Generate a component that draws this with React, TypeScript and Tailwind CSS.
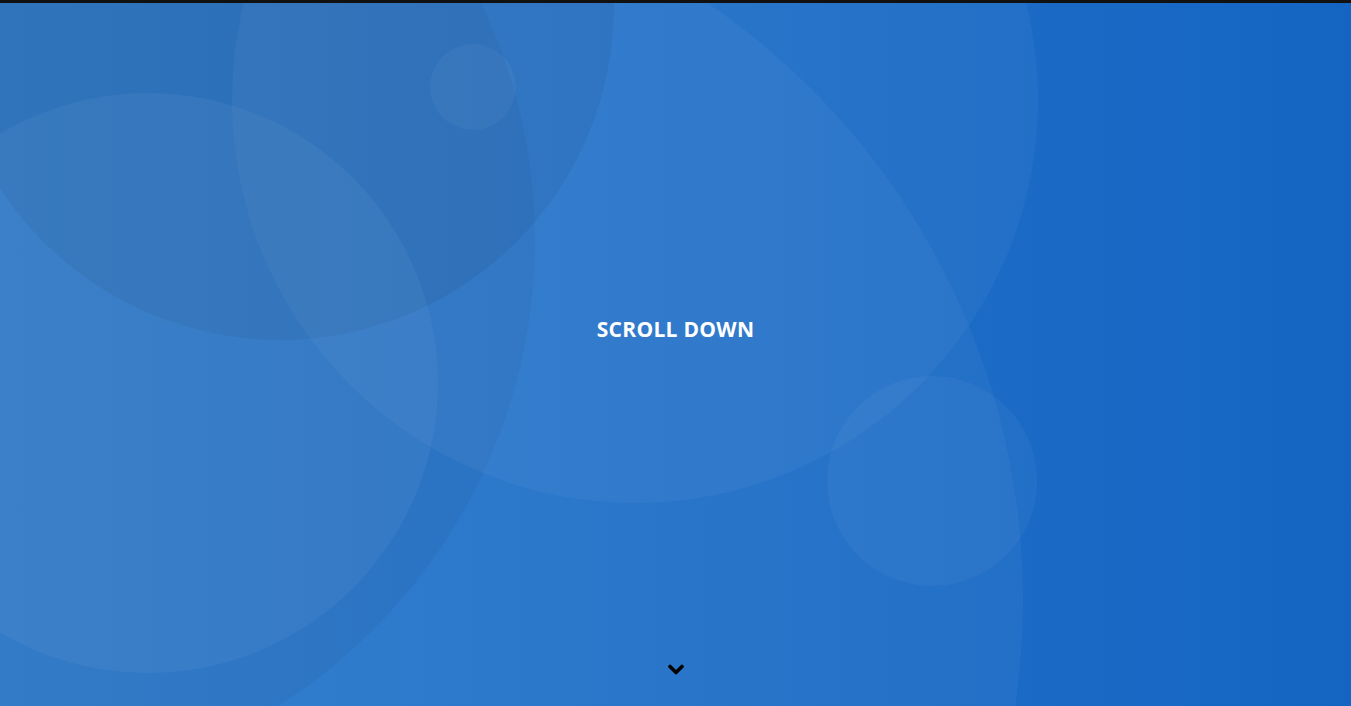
import React from "react";

export default function App() {
  return (
    <div className="w-[1351px] h-[706px] overflow-hidden bg-[#111111] pt-[3px]" style={{ fontFamily: '"Open Sans", "Noto Sans", sans-serif' }}>
      <section className="relative h-[703px] overflow-hidden bg-gradient-to-r from-[#2d7bcc] to-[#1465c3] flex flex-col">
        {/* decorative circles (coordinates relative to section, which starts at y=3) */}
        <div className="absolute rounded-full bg-white/[0.04] left-[-423px] top-[-126px] w-[1446px] h-[1446px]" />
        <div className="absolute rounded-full bg-black/[0.035] left-[-567px] top-[-314px] w-[1102px] h-[1102px]" />
        <div className="absolute rounded-full bg-white/[0.04] left-[232px] top-[-306px] w-[806px] h-[806px]" />
        <div className="absolute rounded-full bg-black/[0.05] left-[-54px] top-[-331px] w-[668px] h-[668px]" />
        <div className="absolute rounded-full bg-white/[0.045] left-[-142px] top-[90px] w-[580px] h-[580px]" />
        <div className="absolute rounded-full bg-white/[0.04] left-[430px] top-[41px] w-[86px] h-[86px]" />
        <div className="absolute rounded-full bg-white/[0.04] left-[827px] top-[373px] w-[210px] h-[210px]" />

        <div className="relative flex-1 flex items-center justify-center">
          <h1 className="text-white font-bold text-[21px] tracking-[0.3px] leading-none">SCROLL DOWN</h1>
        </div>
        <div className="relative h-[50px] flex justify-center pt-[8px]">
          <svg width="16" height="12" viewBox="0 0 16 12">
            <polyline points="2,2.5 8,8.5 14,2.5" fill="none" stroke="#000" strokeWidth="3.6" strokeLinecap="round" strokeLinejoin="round" />
          </svg>
        </div>
      </section>
    </div>
  );
}
